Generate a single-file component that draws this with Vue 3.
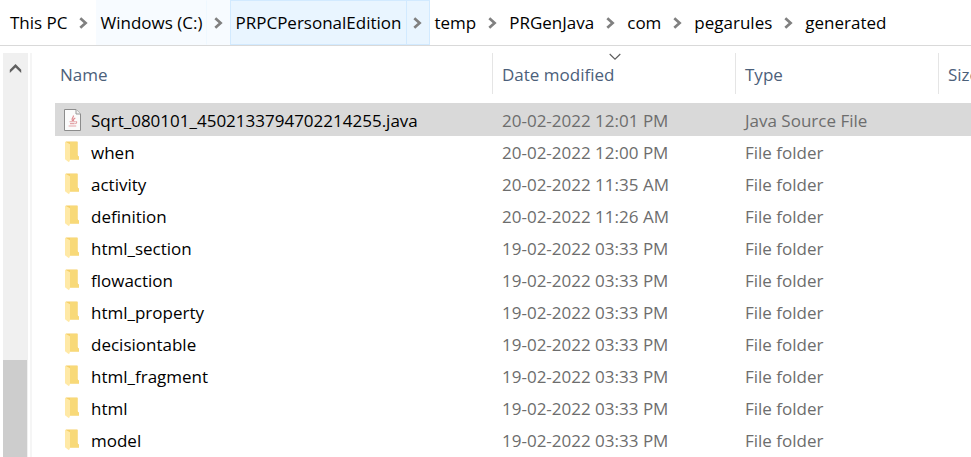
<script setup>
import { ref } from 'vue'

const crumbs = [
  { label: 'This PC' },
  { label: 'Windows (C:)', state: 'faded' },
  { label: 'PRPCPersonalEdition', state: 'hovered' },
  { label: 'temp' },
  { label: 'PRGenJava' },
  { label: 'com' },
  { label: 'pegarules' },
  { label: 'generated' }
]

const folder = (name, modified) => ({ name, modified, type: 'File folder' })

const files = [
  { name: 'Sqrt_080101_4502133794702214255.java', modified: '20-02-2022 12:01 PM', type: 'Java Source File', java: true },
  folder('when', '20-02-2022 12:00 PM'),
  folder('activity', '20-02-2022 11:35 AM'),
  folder('definition', '20-02-2022 11:26 AM'),
  folder('html_section', '19-02-2022 03:33 PM'),
  folder('flowaction', '19-02-2022 03:33 PM'),
  folder('html_property', '19-02-2022 03:33 PM'),
  folder('decisiontable', '19-02-2022 03:33 PM'),
  folder('html_fragment', '19-02-2022 03:33 PM'),
  folder('html', '19-02-2022 03:33 PM'),
  folder('model', '19-02-2022 03:33 PM')
]

const selected = ref(files[0].name)
</script>

<template>
  <div class="explorer">
    <nav class="path" aria-label="Path">
      <div v-for="(crumb, i) in crumbs" :key="crumb.label" class="crumb" :class="crumb.state">
        <button type="button" class="crumb-name">{{ crumb.label }}</button>
        <button v-if="i < crumbs.length - 1" type="button" class="crumb-arrow" :aria-label="'Open ' + crumb.label">
          <svg width="9" height="12" viewBox="0 0 9 12"><path d="M1.3 1.3 6.6 6 1.3 10.7" fill="none" stroke="#808080" stroke-width="2.7" /></svg>
        </button>
      </div>
    </nav>

    <div class="body">
      <div class="scrollbar">
        <button type="button" class="scroll-up" aria-label="Scroll up">
          <svg width="13" height="11" viewBox="0 0 13 11"><path d="M6.5 1 12.2 6.7V10L6.5 4.5.8 10V6.7Z" fill="#606060" /></svg>
        </button>
        <div class="thumb"></div>
      </div>

      <main class="listing">
        <table>
          <colgroup>
            <col class="col-name" />
            <col class="col-date" />
            <col class="col-type" />
            <col />
          </colgroup>
          <thead>
            <tr>
              <th scope="col"><button type="button" class="heading">Name</button></th>
              <th scope="col" aria-sort="descending">
                <button type="button" class="heading">Date modified</button>
                <svg class="sort" width="12" height="8" viewBox="0 0 12 8"><path d="M.7 1 6 6.2 11.3 1" fill="none" stroke="#5c5c5c" stroke-width="1.1" /></svg>
              </th>
              <th scope="col"><button type="button" class="heading">Type</button></th>
              <th scope="col"><button type="button" class="heading">Size</button></th>
            </tr>
          </thead>
          <tbody>
            <tr v-for="file in files" :key="file.name" :class="{ selected: file.name === selected }" @click="selected = file.name">
              <td>
                <div class="file">
                  <svg v-if="file.java" class="icon" width="18" height="22" viewBox="0 0 18 22">
                    <path d="M.5.5H12L16.5 5V21.5H.5Z" fill="#fbfbfb" stroke="#8c8c8c" />
                    <path d="M12 .5V5H16.5" fill="#f1f1f1" stroke="#999" />
                    <path d="M9.3 6.5C10.3 8.4 6.5 9.3 8.4 12M11.3 9C9 10 9 10.7 9.5 12" fill="none" stroke="#e08c91" stroke-width="1.2" />
                    <path d="M5.5 12.7H11M6 14.6H10.6M4.6 17H12.2M11.4 12.6C13.4 12.2 12.8 14.4 11.2 14.7" fill="none" stroke="#e3a3a7" stroke-width="1.1" />
                  </svg>
                  <svg v-else class="icon" width="18" height="22" viewBox="0 0 18 22">
                    <path d="M2 .5H13.5V14.3L15 16V18.5H5.5L2 17Z" fill="#f5cf68" />
                    <path d="M6 1H13.5V14.3L15 16V18.5H6Z" fill="#f8d978" />
                    <path d="M1 .5 6 3.2V19L5 21.3 1 18.2Z" fill="#ffe9a6" />
                  </svg>
                  <span>{{ file.name }}</span>
                </div>
              </td>
              <td>{{ file.modified }}</td>
              <td>{{ file.type }}</td>
              <td></td>
            </tr>
          </tbody>
        </table>
      </main>
    </div>
  </div>
</template>

<style>
body {
  overflow: hidden;
  background: #fff;
}
</style>

<style scoped>
.explorer {
  display: flex;
  flex-direction: column;
  height: 100vh;
  overflow: hidden;
  font-family: "Segoe UI", "Open Sans", "Noto Sans", sans-serif;
  font-size: 17px;
  line-height: 24px;
  color: #000;
}

button {
  margin: 0;
  padding: 0;
  border: 0;
  background: none;
  font: inherit;
  color: inherit;
}

.path {
  display: flex;
  flex: none;
  height: 45px;
  padding-left: 5px;
  border-bottom: 1px solid #d9d9d9;
  white-space: nowrap;
}

.crumb {
  display: flex;
}

.crumb-name {
  padding: 0 4px;
  border: 1px solid transparent;
}

.crumb-arrow {
  display: flex;
  align-items: center;
  justify-content: center;
  width: 23px;
  border: 1px solid transparent;
  border-left: 0;
}

.faded {
  background: #f7fbff;
}

.faded .crumb-name {
  border-right-color: #eff8ff;
}

.hovered {
  background: #e9f5ff;
}

.hovered button {
  border-color: #d2eaff;
}

.body {
  display: flex;
  flex: 1;
  min-height: 0;
  padding: 7px 0 0 3px;
}

.scrollbar {
  display: flex;
  flex: none;
  flex-direction: column;
  width: 25px;
  background: #f0f0f0;
}

.scroll-up {
  height: 30px;
}

.thumb {
  width: 24px;
  height: 24%;
  margin-top: auto;
  background: #cdcdcd;
}

.listing {
  flex: 1;
  min-width: 0;
  margin-left: 2px;
  padding-left: 23px;
  border-left: 2px solid #f5f5f5;
  overflow: hidden;
}

table {
  width: 100%;
  border-collapse: collapse;
  table-layout: fixed;
  white-space: nowrap;
}

.col-name {
  width: 438px;
}

.col-date {
  width: 243px;
}

.col-type {
  width: 203px;
}

th {
  position: relative;
  height: 51px;
  padding: 0;
  text-align: left;
  vertical-align: top;
  font-weight: 400;
  color: #4c607a;
}

.heading {
  display: block;
  width: 100%;
  height: 41px;
  padding: 2px 0 0 9px;
  border-right: 1px solid #e5e5e5;
  text-align: left;
}

th:first-child .heading {
  padding-left: 5px;
}

th:last-child .heading {
  border-right: 0;
}

.sort {
  position: absolute;
  top: 0;
  left: 50%;
  margin-left: -6px;
}

td {
  box-sizing: border-box;
  height: 32px;
  padding: 2px 0 0 9px;
  color: #6d6d6d;
}

td:first-child {
  padding-top: 0;
  color: #000;
}

.selected td {
  background: #d9d9d9;
  box-shadow: 0 -1px #d9d9d9;
}

.file {
  display: flex;
  align-items: center;
  gap: 9px;
}

.file span {
  padding-top: 2px;
}

.icon {
  flex: none;
}
</style>
